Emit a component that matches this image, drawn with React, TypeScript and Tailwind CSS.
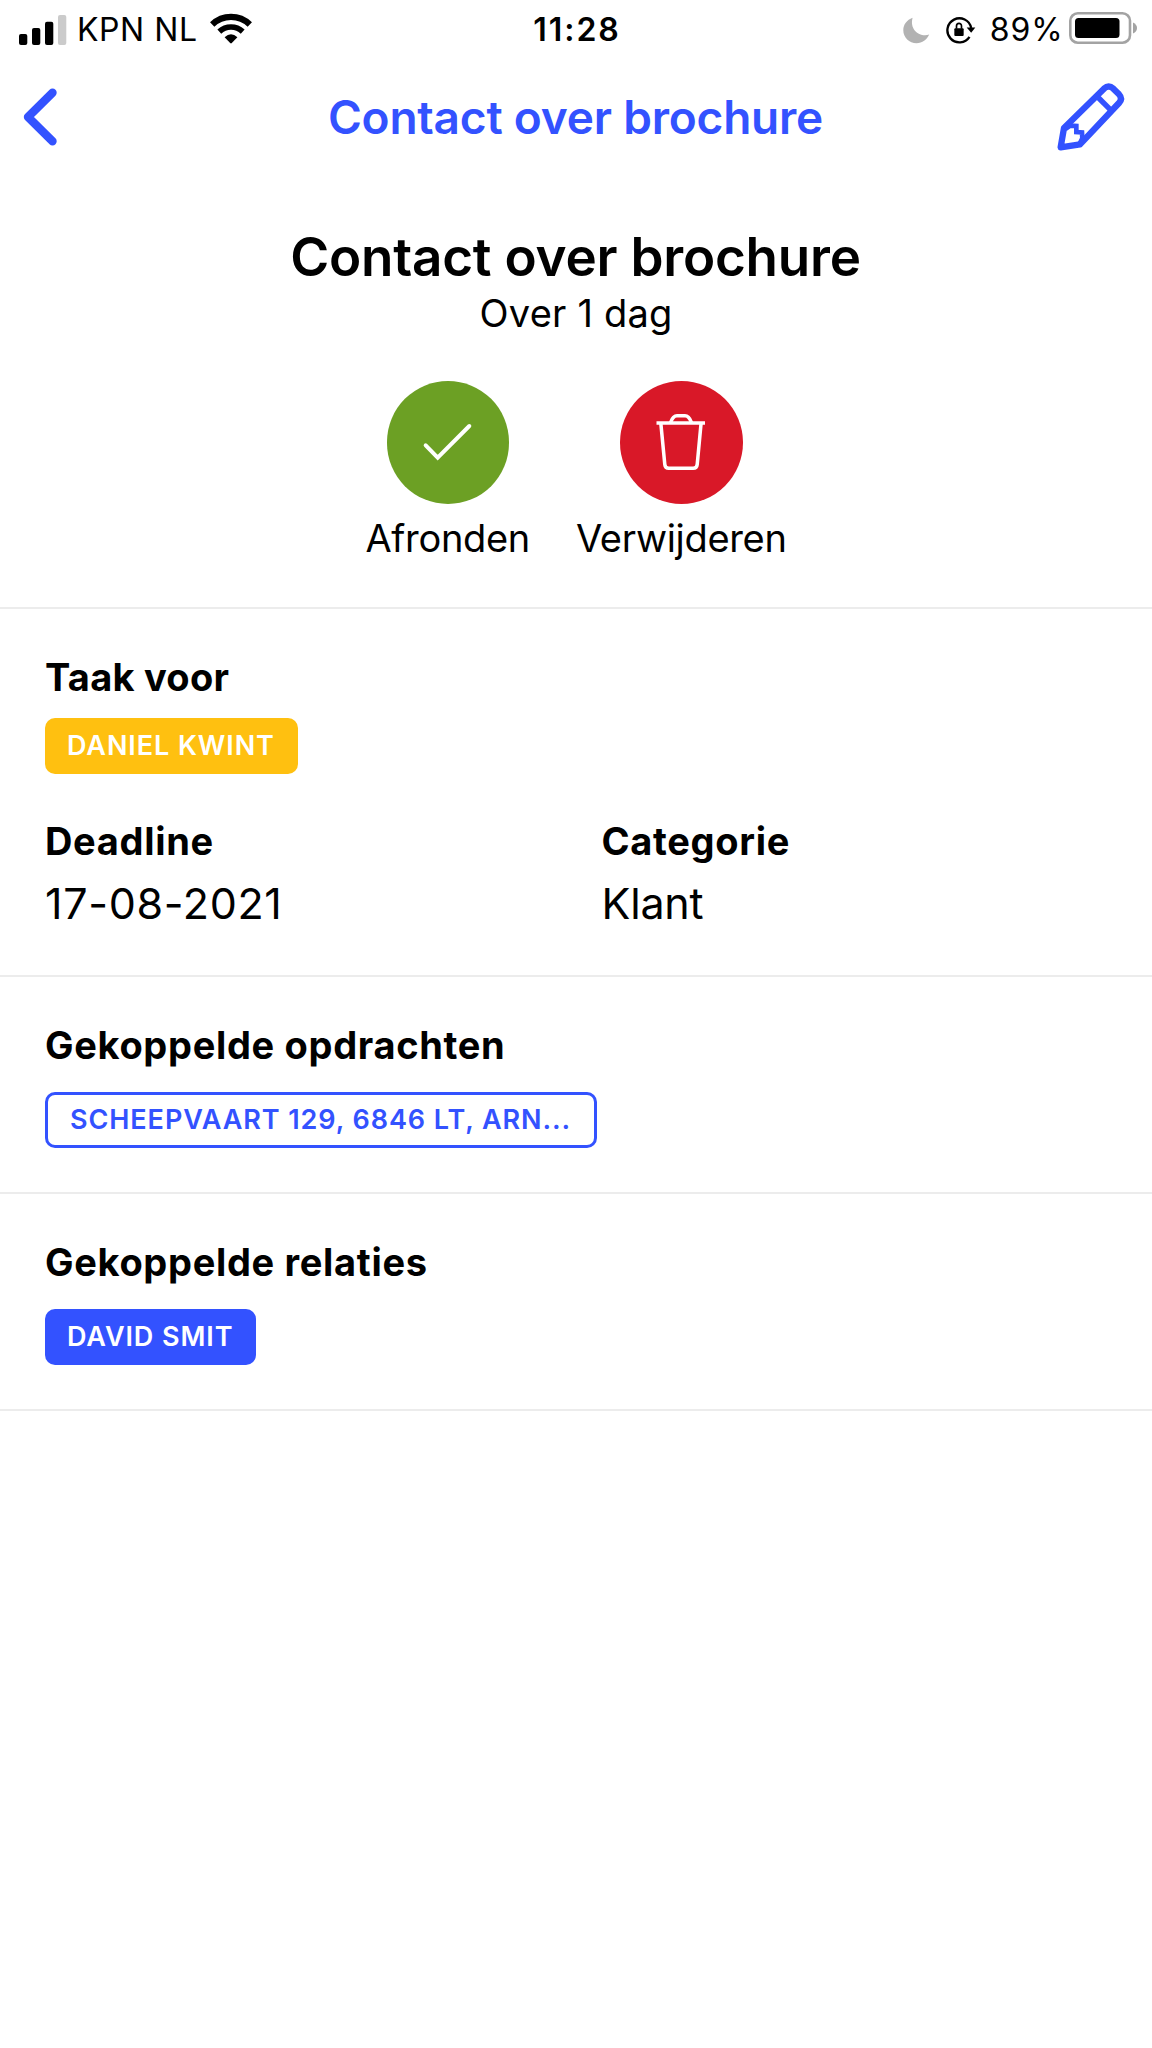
import type { ReactNode } from 'react'

function SignalIcon() {
  return (
    <svg className="w-[48px] h-[30px]" viewBox="0 0 48 30">
      <rect x="0" y="19" width="8.3" height="11" rx="2" fill="#000" />
      <rect x="13" y="13" width="8.3" height="17" rx="2" fill="#000" />
      <rect x="26" y="6.7" width="8.3" height="23.3" rx="2" fill="#000" />
      <rect x="39" y="0" width="8.3" height="30" rx="2" fill="#cbcbcb" />
    </svg>
  )
}

function WifiIcon() {
  return (
    <svg className="w-[42px] h-[31px]" viewBox="0 0 42 31">
      <path d="M2.2 11.4 A27 27 0 0 1 39.8 11.4" fill="none" stroke="#000" strokeWidth="6.2" />
      <path d="M9.3 18.6 A17 17 0 0 1 32.7 18.6" fill="none" stroke="#000" strokeWidth="5.6" />
      <path d="M14.6 24.3 Q21 18.3 27.4 24.3 L21.8 30.1 Q21 30.9 20.2 30.1 Z" fill="#000" />
    </svg>
  )
}

function MoonIcon() {
  return (
    <svg className="w-[27px] h-[27px]" viewBox="0 0 27 27">
      <path
        d="M9.6 0.8 C3.8 3 0.3 7.6 0.3 13.2 C0.3 20.4 6.2 26.2 13.6 26.2 C19.2 26.2 24 22.8 26.2 17.6 C17 20.6 6.2 13 9.6 0.8 Z"
        fill="#b2b2b2"
      />
    </svg>
  )
}

function RotationLockIcon() {
  return (
    <svg className="w-[30px] h-[28px]" viewBox="0 0 90 84">
      <path d="M70.5 62.5 A36 36 0 1 1 75.5 36" fill="none" stroke="#000" strokeWidth="7" />
      <path d="M62 34.5 H88 L75.5 50 Z" fill="#000" />
      <rect x="25" y="37" width="28" height="23" rx="3" fill="#000" />
      <path d="M31.5 38 V30 a7.5 8 0 0 1 15 0 V38" fill="none" stroke="#000" strokeWidth="5" />
    </svg>
  )
}

function BatteryIcon() {
  return (
    <svg className="w-[69px] h-[32px]" viewBox="0 0 69 32">
      <rect x="1.3" y="1.3" width="59.7" height="29.4" rx="7.5" fill="none" stroke="#a3a3a3" strokeWidth="2.6" />
      <rect x="6" y="6" width="44.5" height="20" rx="3.5" fill="#000" />
      <path d="M64 10.5 Q68 12.5 68 16 Q68 19.5 64 21.5 Z" fill="#a3a3a3" />
    </svg>
  )
}

function BackIcon() {
  return (
    <svg className="w-[36px] h-[58px]" viewBox="0 0 36 58">
      <path
        d="M30.5 4.8 L6 29 L30.5 53.2"
        fill="none"
        stroke="#3352ff"
        strokeWidth="8.4"
        strokeLinecap="round"
        strokeLinejoin="round"
      />
    </svg>
  )
}

function PencilIcon() {
  return (
    <svg className="w-[80px] h-[78px]" viewBox="0 0 240 234" fill="none" stroke="#3352ff" strokeLinejoin="round">
      <path
        d="M32 205 L42 147 L162 29 Q176 16 190 29 L207 46 Q219 59 207 72 L90 196 Z"
        strokeWidth="19"
      />
      <path d="M143 54 L187 98" strokeWidth="16" />
      <path d="M46 150 L61 140 L79 141 L79 159 L96 160 L97 178 L88 196" strokeWidth="14" strokeLinejoin="miter" />
    </svg>
  )
}

function CheckIcon() {
  return (
    <svg className="size-[123px]" viewBox="0 0 123 123">
      <path
        d="M38.7 64.3 L50.7 76.7 L82.3 45"
        fill="none"
        stroke="#fff"
        strokeWidth="4"
        strokeLinecap="round"
      />
    </svg>
  )
}

function TrashIcon() {
  return (
    <svg className="size-[123px]" viewBox="0 0 123 123" fill="none" stroke="#fff" strokeWidth="3.5">
      <path d="M36.5 42 H85" />
      <path d="M40.8 42 L44.8 83.5 Q45.2 87.3 48.8 87.3 H73.2 Q76.8 87.3 77.2 83.5 L81.1 42" />
      <path d="M50.5 41.5 Q53 34.8 57 34.8 H65 Q69 34.8 71.5 41.5" />
    </svg>
  )
}

function Action({ label, color, children }: { label: string; color: string; children: ReactNode }) {
  return (
    <div className="flex flex-col items-center">
      <div className={`ml-px size-[122.5px] rounded-full ${color}`}>{children}</div>
      <div className="mt-[10.5px] text-[38px] leading-[48px] tracking-[-0.33px]">{label}</div>
    </div>
  )
}

function Label({ className = 'tracking-[0.68px]', children }: { className?: string; children: ReactNode }) {
  return <h2 className={`text-[38px] leading-[48px] font-bold ${className}`}>{children}</h2>
}

function Badge({ className, children }: { className: string; children: ReactNode }) {
  return (
    <div
      className={`flex items-center h-[55.5px] rounded-[10px] text-[27px] font-semibold tracking-[0.92px] whitespace-nowrap ${className}`}
    >
      {children}
    </div>
  )
}

export default function App() {
  return (
    <div className="min-h-[2048px] bg-white text-black font-['Inter',sans-serif]">
      <div className="grid grid-cols-3 items-center h-[60px] text-[32px] leading-[60px]">
        <div className="flex items-center pl-[18.5px]">
          <SignalIcon />
          <span className="ml-[10.5px] tracking-[0.55px]">KPN NL</span>
          <span className="ml-[12px] -mt-[4px]"><WifiIcon /></span>
        </div>
        <div className="pl-[2px] text-center font-semibold tracking-[2px]">11:28</div>
        <div className="flex items-center justify-end pr-[14.5px]">
          <MoonIcon />
          <span className="ml-[16px]"><RotationLockIcon /></span>
          <span className="ml-[14px] tracking-[0.9px]">89%</span>
          <span className="ml-[5px] -mt-[4px]"><BatteryIcon /></span>
        </div>
      </div>

      <header className="flex items-center justify-between h-[114px] pl-[22px] pr-[22px]">
        <div className="w-[80px]"><BackIcon /></div>
        <div className="pr-px text-[46px] font-semibold tracking-[-0.2px] text-[#3352ff]">Contact over brochure</div>
        <div className="pt-px"><PencilIcon /></div>
      </header>

      <section className="flex flex-col items-center pt-[51px] pb-[45px] border-b-2 border-[#ececec]">
        <h1 className="pr-px text-[53px] leading-[64px] font-semibold tracking-[-0.23px]">Contact over brochure</h1>
        <p className="text-[38px] leading-[48px] tracking-[0.2px]">Over 1 dag</p>
        <div className="flex mt-[44px] gap-[46px]">
          <Action label="Afronden" color="bg-[#6ca024]"><CheckIcon /></Action>
          <Action label="Verwijderen" color="bg-[#d91828]"><TrashIcon /></Action>
        </div>
      </section>

      <section className="px-[45px] pt-[44px] pb-[44px] border-b-2 border-[#ececec]">
        <Label className="tracking-[0.25px]">Taak voor</Label>
        <Badge className="mt-[17px] w-[253px] pl-[22px] bg-[#ffc010] text-white">DANIEL KWINT</Badge>
        <div className="flex mt-[43.5px]">
          <div className="w-[556.5px]">
            <Label>Deadline</Label>
            <div className="mt-[10px] text-[43px] leading-[56px] tracking-[0.68px]">17-08-2021</div>
          </div>
          <div>
            <Label>Categorie</Label>
            <div className="mt-[10px] text-[43px] leading-[56px] tracking-[-0.2px]">Klant</div>
          </div>
        </div>
      </section>

      <section className="px-[45px] pt-[44px] pb-[44.5px] border-b-2 border-[#ececec]">
        <Label>Gekoppelde opdrachten</Label>
        <Badge className="mt-[23px] w-[552px] pl-[22px] border-3 border-[#3352ff] text-[#3352ff]">
          SCHEEPVAART 129, 6846 LT, ARN...
        </Badge>
      </section>

      <section className="px-[45px] pt-[44px] pb-[44.5px] border-b-2 border-[#ececec]">
        <Label>Gekoppelde relaties</Label>
        <Badge className="mt-[23px] w-[211px] pl-[22px] bg-[#3352ff] text-white">DAVID SMIT</Badge>
      </section>
    </div>
  )
}
